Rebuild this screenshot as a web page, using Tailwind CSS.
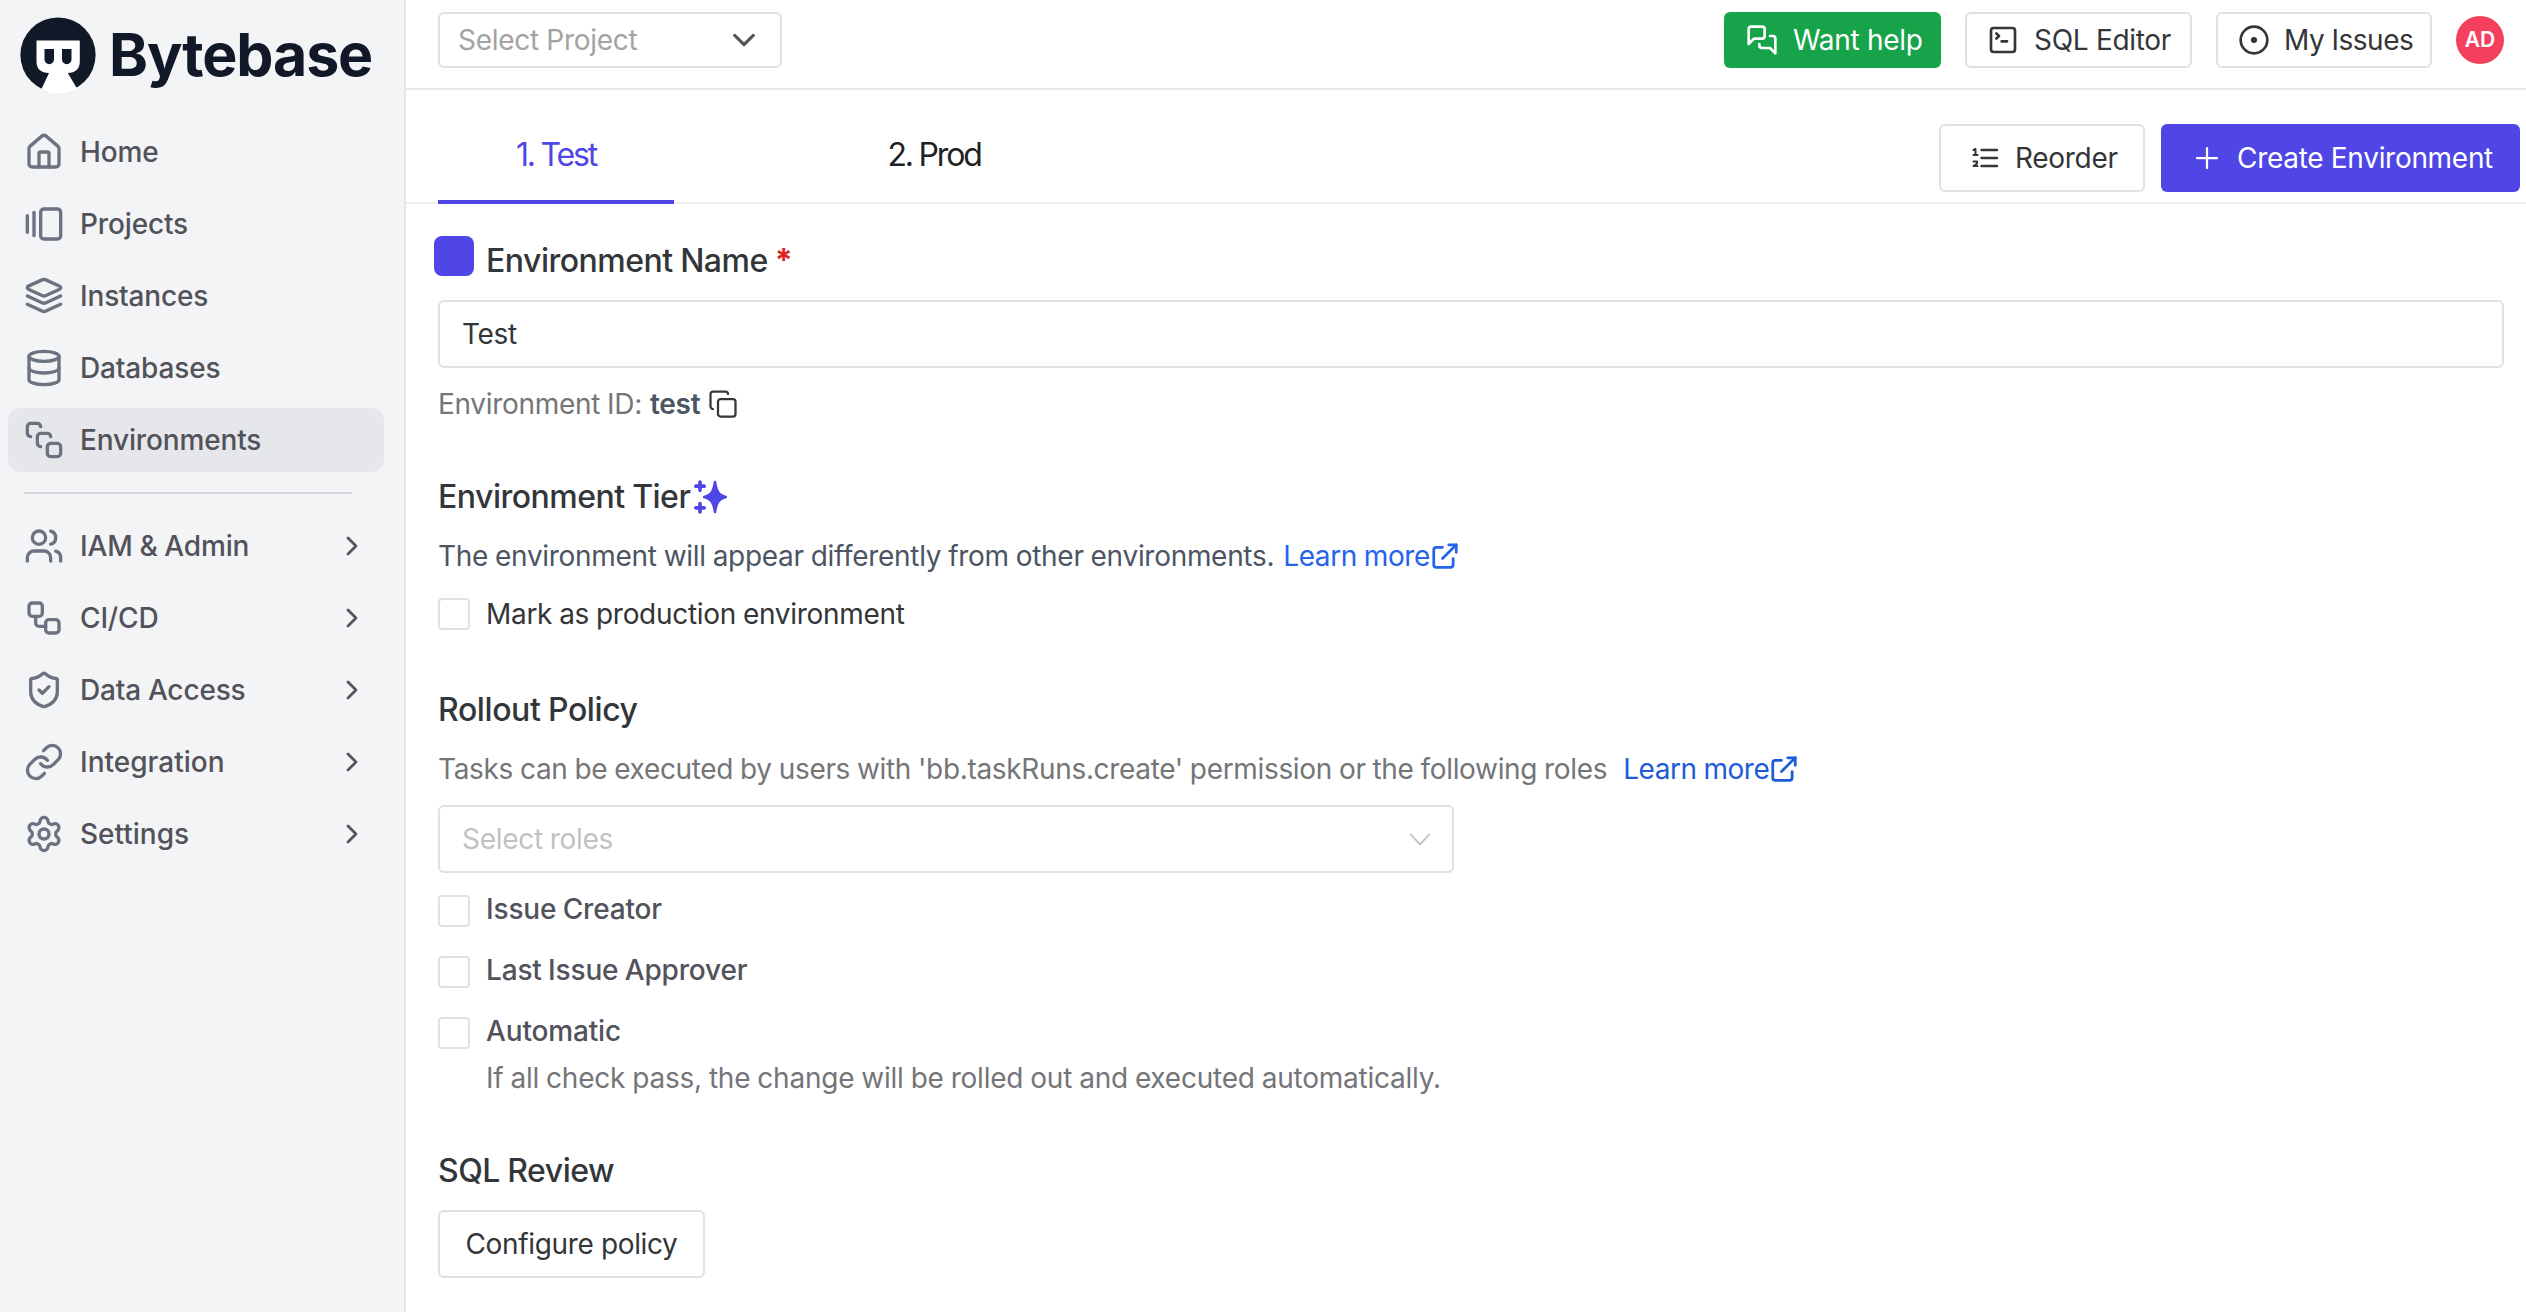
<!DOCTYPE html>
<html lang="en">
<head>
<meta charset="utf-8">
<title>Bytebase - Environments</title>
<script src="https://cdn.jsdelivr.net/npm/@tailwindcss/browser@4"></script>
</head>
<body class="h-[1312px] w-[2526px] overflow-hidden bg-white font-['Inter',sans-serif] text-[28px] leading-10 tracking-[-0.3px] text-[#333639] [word-spacing:-0.6px]">
<svg class="hidden">
  <defs>
    <symbol id="chev" viewBox="0 0 24 24" fill="none" stroke="currentColor" stroke-linecap="round" stroke-linejoin="round"><path d="m9 18 6-6-6-6"/></symbol>
    <symbol id="ext" viewBox="0 0 24 24" fill="none" stroke="currentColor" stroke-width="2.200" stroke-linecap="round" stroke-linejoin="round"><path d="M15 3h6v6"/><path d="M10 14 21 3"/><path d="M18.500 14v5a2 2 0 0 1-2 2H5a2 2 0 0 1-2-2V7a2 2 0 0 1 2-2h5"/></symbol>
  </defs>
</svg>
<div class="flex h-full">
  <aside class="h-full w-[406px] shrink-0 border-r-2 border-[#e5e7eb] bg-[#f3f4f6] pt-[17px]">
    <div class="flex h-[76px] items-center pl-5 text-[#111827]">
      <svg class="size-[76px]" viewBox="0 0 76 76"><circle cx="38" cy="38" r="37.6" fill="#111827"/><path d="M16.500 23.500h43.300v21c0 7.500-4.500 11.500-12 11.500L57 71.500q-19 10-35.500.5l7.500-16c-8 0-12.500-4-12.500-11.500z" fill="#fff"/><path d="M24.500 32h9.500v10.500a4.750 4.750 0 0 1-9.500 0zM42 32h9.500v10.500a4.750 4.750 0 0 1-9.500 0z" fill="#111827"/></svg>
      <span class="ml-[13px] text-[59px] leading-[76px] font-bold tracking-[-1.1px]">Bytebase</span>
    </div>
    <nav class="mt-[27px] flex flex-col gap-2 px-2 pr-5 font-medium tracking-[-0.15px] text-[#52525b] [word-spacing:-0.5px] [&_svg]:stroke-[#6b7280]">
      <a class="flex h-16 items-center gap-4 rounded-xl px-4"><svg class="size-10" viewBox="0 0 24 24" fill="none" stroke-width="2" stroke-linecap="round" stroke-linejoin="round"><path d="M15 21v-8a1 1 0 0 0-1-1h-4a1 1 0 0 0-1 1v8"/><path d="M3 10a2 2 0 0 1 .709-1.528l7-5.999a2 2 0 0 1 2.582 0l7 5.999A2 2 0 0 1 21 10v9a2 2 0 0 1-2 2H5a2 2 0 0 1-2-2z"/></svg><span>Home</span></a>
      <a class="flex h-16 items-center gap-4 rounded-xl px-4"><svg class="size-10" viewBox="0 0 24 24" fill="none" stroke-width="2" stroke-linecap="round" stroke-linejoin="round"><path d="M2 7v10"/><path d="M6 5v14"/><rect width="12" height="18" x="10" y="3" rx="2"/></svg><span>Projects</span></a>
      <a class="flex h-16 items-center gap-4 rounded-xl px-4"><svg class="size-10" viewBox="0 0 24 24" fill="none" stroke-width="2" stroke-linecap="round" stroke-linejoin="round"><path d="m12.830 2.180a2 2 0 0 0-1.660 0L2.600 6.080a1 1 0 0 0 0 1.830l8.580 3.910a2 2 0 0 0 1.660 0l8.580-3.900a1 1 0 0 0 0-1.830Z"/><path d="m22 12-9.170 4.160a2 2 0 0 1-1.660 0L2 12"/><path d="m22 17-9.170 4.160a2 2 0 0 1-1.660 0L2 17"/></svg><span>Instances</span></a>
      <a class="flex h-16 items-center gap-4 rounded-xl px-4"><svg class="size-10" viewBox="0 0 24 24" fill="none" stroke-width="2" stroke-linecap="round" stroke-linejoin="round"><ellipse cx="12" cy="5" rx="9" ry="3"/><path d="M3 5V19A9 3 0 0 0 21 19V5"/><path d="M3 12A9 3 0 0 0 21 12"/></svg><span>Databases</span></a>
      <a class="flex h-16 items-center gap-4 rounded-xl bg-[#e5e7eb] px-4"><svg class="size-10" viewBox="0 0 24 24" fill="none" stroke-width="2" stroke-linecap="round" stroke-linejoin="round"><rect width="8" height="8" x="14" y="14" rx="2"/><path d="M4 10a2 2 0 0 1-2-2V4a2 2 0 0 1 2-2h4a2 2 0 0 1 2 2"/><path d="M10 16a2 2 0 0 1-2-2v-4a2 2 0 0 1 2-2h4a2 2 0 0 1 2 2"/></svg><span>Environments</span></a>
      <div class="mx-4 mt-3 mb-3 h-0.5 w-[328px] bg-[#d4d6da]"></div>
      <a class="flex h-16 items-center gap-4 rounded-xl px-4"><svg class="size-10" viewBox="0 0 24 24" fill="none" stroke-width="2" stroke-linecap="round" stroke-linejoin="round"><path d="M16 21v-2a4 4 0 0 0-4-4H6a4 4 0 0 0-4 4v2"/><circle cx="9" cy="7" r="4"/><path d="M22 21v-2a4 4 0 0 0-3-3.870"/><path d="M16 3.130a4 4 0 0 1 0 7.750"/></svg><span>IAM &amp; Admin</span><svg class="ml-auto size-8 stroke-2"><use href="#chev"/></svg></a>
      <a class="flex h-16 items-center gap-4 rounded-xl px-4"><svg class="size-10" viewBox="0 0 24 24" fill="none" stroke-width="2" stroke-linecap="round" stroke-linejoin="round"><rect width="8" height="8" x="3" y="3" rx="2"/><path d="M7 11v4a2 2 0 0 0 2 2h4"/><rect width="8" height="8" x="13" y="13" rx="2"/></svg><span>CI/CD</span><svg class="ml-auto size-8 stroke-2"><use href="#chev"/></svg></a>
      <a class="flex h-16 items-center gap-4 rounded-xl px-4"><svg class="size-10" viewBox="0 0 24 24" fill="none" stroke-width="2" stroke-linecap="round" stroke-linejoin="round"><path d="M20 13c0 5-3.500 7.500-7.660 8.950a1 1 0 0 1-.67-.010C7.500 20.500 4 18 4 13V6a1 1 0 0 1 1-1c2 0 4.500-1.200 6.240-2.720a1.170 1.170 0 0 1 1.520 0C14.510 3.810 17 5 19 5a1 1 0 0 1 1 1z"/><path d="m9 12 2 2 4-4"/></svg><span>Data Access</span><svg class="ml-auto size-8 stroke-2"><use href="#chev"/></svg></a>
      <a class="flex h-16 items-center gap-4 rounded-xl px-4"><svg class="size-10" viewBox="0 0 24 24" fill="none" stroke-width="2" stroke-linecap="round" stroke-linejoin="round"><path d="M10 13a5 5 0 0 0 7.540.540l3-3a5 5 0 0 0-7.070-7.070l-1.720 1.710"/><path d="M14 11a5 5 0 0 0-7.540-.540l-3 3a5 5 0 0 0 7.070 7.070l1.710-1.710"/></svg><span class="tracking-normal">Integration</span><svg class="ml-auto size-8 stroke-2"><use href="#chev"/></svg></a>
      <a class="flex h-16 items-center gap-4 rounded-xl px-4"><svg class="size-10" viewBox="0 0 24 24" fill="none" stroke-width="2" stroke-linecap="round" stroke-linejoin="round"><path d="M9.671 4.136a2.340 2.340 0 0 1 4.659 0 2.340 2.340 0 0 0 3.319 1.915 2.340 2.340 0 0 1 2.330 4.033 2.340 2.340 0 0 0 0 3.831 2.340 2.340 0 0 1-2.330 4.033 2.340 2.340 0 0 0-3.319 1.915 2.340 2.340 0 0 1-4.659 0 2.340 2.340 0 0 0-3.320-1.915 2.340 2.340 0 0 1-2.330-4.033 2.340 2.340 0 0 0 0-3.831A2.340 2.340 0 0 1 6.350 6.051a2.340 2.340 0 0 0 3.319-1.915"/><circle cx="12" cy="12" r="3"/></svg><span class="tracking-normal">Settings</span><svg class="ml-auto size-8 stroke-2"><use href="#chev"/></svg></a>
    </nav>
  </aside>

  <div class="min-w-0 flex-1">
    <header class="flex h-[90px] items-start border-b-2 border-[#e5e7eb] pt-3 pr-[22px] pl-8">
      <button class="flex h-14 w-[344px] items-center justify-between rounded-md border-2 border-[#e0e0e6] pr-5 pl-[18px] text-[#a3a3a3]"><span>Select Project</span><svg class="size-8 text-[#555]" viewBox="0 0 24 24" fill="none" stroke="currentColor" stroke-width="2.400" stroke-linecap="round" stroke-linejoin="round"><path d="m5 8.500 7 7 7-7"/></svg></button>
      <div class="ml-auto flex h-14 items-center gap-6">
        <button class="flex h-14 w-[217px] items-center gap-[15px] rounded-md bg-[#16a34a] pl-[22px] text-white"><svg class="size-8" viewBox="0 0 24 24" fill="none" stroke="currentColor" stroke-width="2" stroke-linecap="round" stroke-linejoin="round"><path d="M14 9a2 2 0 0 1-2 2H6l-4 4V4a2 2 0 0 1 2-2h8a2 2 0 0 1 2 2z"/><path d="M18 9h2a2 2 0 0 1 2 2v11l-4-4h-6a2 2 0 0 1-2-2v-1"/></svg><span>Want help</span></button>
        <button class="flex h-14 w-[227px] items-center gap-[15px] rounded-md border-2 border-[#e0e0e6] pl-5"><svg class="size-8" viewBox="0 0 24 24" fill="none" stroke="currentColor" stroke-width="2" stroke-linecap="round" stroke-linejoin="round"><path d="m7 11 2-2-2-2"/><path d="M11 13h4"/><rect width="18" height="18" x="3" y="3" rx="2"/></svg><span>SQL Editor</span></button>
        <button class="flex h-14 w-[216px] items-center gap-[14px] rounded-md border-2 border-[#e0e0e6] pl-5 tracking-[-0.5px]"><svg class="size-8" viewBox="0 0 24 24" fill="none" stroke="currentColor" stroke-width="2"><circle cx="12" cy="12" r="10"/><circle cx="12" cy="12" r="1.300" fill="currentColor"/></svg><span>My Issues</span></button>
        <div class="flex size-12 items-center justify-center rounded-full bg-[#f43f5e] text-[21px] font-semibold tracking-normal text-white"><span>AD</span></div>
      </div>
    </header>

    <div class="flex h-[114px] border-b-2 border-[#efeff1] pr-1.5 pl-8">
      <div class="flex h-[114px] gap-[142px] text-[32px] tracking-[-2.2px] [word-spacing:-5px]">
        <button class="flex w-[236px] justify-center border-b-4 border-[#4f46e5] pt-[45px] text-[#4f46e5]"><span>1. Test</span></button>
        <button class="flex w-[236px] justify-center pt-[45px] text-[#1f2225]"><span>2. Prod</span></button>
      </div>
      <div class="ml-auto flex gap-4 pt-[34px]">
        <button class="flex h-[68px] w-[206px] items-center gap-4 rounded-md border-2 border-[#e0e0e6] pl-[30px]"><svg class="size-7" viewBox="0 0 28 28" fill="none" stroke="currentColor" stroke-width="2.400" stroke-linecap="round" stroke-linejoin="round"><path d="M10.500 6H26M10.500 14H26M10.500 22H26"/><path d="M2.500 6l2-1v6M2.500 11h4M2.500 17.500h3.500v2l-3.500 2.500h4" stroke-width="2"/></svg><span>Reorder</span></button>
        <button class="flex h-[68px] w-[359px] items-center gap-[15px] rounded-md bg-[#4f46e5] pl-[31px] text-white"><svg class="size-[30px]" viewBox="0 0 24 24" fill="none" stroke="currentColor" stroke-width="1.800" stroke-linecap="round"><path d="M4 12h16M12 4v16"/></svg><span>Create Environment</span></button>
      </div>
    </div>

    <main class="pr-[22px] pl-8">
      <div class="flex h-24 pt-8 text-[32px] font-medium tracking-[-0.5px]">
        <div class="-ml-1 size-10 rounded-lg bg-[#4f46e5]"></div>
        <h2 class="mt-[5px] ml-3"><span>Environment Name</span><span class="ml-[7px] font-bold text-[#dc2626]">*</span></h2>
      </div>
      <div class="flex h-[68px] items-center rounded-md border-2 border-[#e0e0e6] pl-[22px]"><span>Test</span></div>
      <div class="mt-4 flex h-10 items-center text-[#737579]"><span>Environment ID:</span><span class="ml-2 font-semibold text-[#4b5563]">test</span><svg class="ml-2 size-[30px] text-[#333639]" viewBox="0 0 24 24" fill="none" stroke="currentColor" stroke-width="1.800" stroke-linecap="round" stroke-linejoin="round"><rect width="14" height="14" x="8" y="8" rx="2"/><path d="M4 16c-1.100 0-2-.9-2-2V4c0-1.100.9-2 2-2h10c1.100 0 2 .9 2 2"/></svg></div>

      <h2 class="mt-[53px] flex h-10 items-center text-[32px] font-medium tracking-[-0.5px]"><span>Environment Tier</span><svg class="size-10 text-[#4f46e5]" viewBox="0 0 24 24" fill="currentColor" stroke="currentColor" stroke-width="1.500" stroke-linejoin="round"><path d="M15 3c.9 5.500 2 7.800 6.500 9-4.500 1.200-5.600 3.500-6.500 9-.9-5.500-2-7.800-6.500-9 4.500-1.200 5.600-3.500 6.500-9z"/><path d="M6 3v5M3.500 5.500h5M6 16v5M3.500 18.500h5" stroke-width="2.200" stroke-linecap="round"/></svg></h2>
      <p class="mt-[19px] flex h-10 items-center text-[#4b5563]"><span>The environment will appear differently from other environments.</span><a class="ml-[9px] flex items-center text-[#2563eb]"><span class="tracking-[-0.4px]">Learn more</span><svg class="size-[30px]"><use href="#ext"/></svg></a></p>
      <label class="mt-[18px] flex h-10 items-center"><i class="size-8 rounded border-2 border-[#e0e0e6]"></i><span class="ml-4">Mark as production environment</span></label>

      <h2 class="mt-14 flex h-10 items-center text-[32px] font-medium tracking-[-0.4px]"><span>Rollout Policy</span></h2>
      <p class="mt-[19px] flex h-10 items-center text-[#737579]"><span class="tracking-[-0.33px]">Tasks can be executed by users with 'bb.taskRuns.create' permission or the following roles</span><a class="ml-4 flex items-center text-[#1d5bd8]"><span class="tracking-[-0.45px]">Learn more</span><svg class="size-[30px]"><use href="#ext"/></svg></a></p>
      <div class="mt-4 flex h-[68px] w-[1016px] items-center justify-between rounded-md border-2 border-[#e0e0e6] pr-4 pl-[22px] text-[#c2c2c2]"><span>Select roles</span><svg class="size-8" viewBox="0 0 24 24" fill="none" stroke="currentColor" stroke-width="1.400" stroke-linecap="round" stroke-linejoin="round"><path d="m5 8.500 7 7.500 7-7.500"/></svg></div>
      <div class="font-medium tracking-[-0.15px] text-[#52525b] [word-spacing:-1px]">
        <label class="mt-4 flex h-[61px] items-start"><i class="mt-1.5 size-8 rounded border-2 border-[#e0e0e6]"></i><span class="ml-4">Issue Creator</span></label>
        <label class="flex h-[61px] items-start"><i class="mt-1.5 size-8 rounded border-2 border-[#e0e0e6]"></i><span class="ml-4">Last Issue Approver</span></label>
        <label class="flex h-[47px] items-start"><i class="mt-1.5 size-8 rounded border-2 border-[#e0e0e6]"></i><span class="ml-4">Automatic</span></label>
        <p class="pl-12 font-normal tracking-[-0.23px] text-[#737579] [word-spacing:-0.6px]"><span>If all check pass, the change will be rolled out and executed automatically.</span></p>
      </div>
      <h2 class="mt-[53px] flex h-10 items-center text-[32px] font-medium tracking-[-0.5px]"><span>SQL Review</span></h2>
      <button class="mt-[19px] flex h-[68px] w-[267px] items-center justify-center rounded-md border-2 border-[#e0e0e6] tracking-[-0.35px]"><span>Configure policy</span></button>
    </main>
  </div>
</div>
</body>
</html>
